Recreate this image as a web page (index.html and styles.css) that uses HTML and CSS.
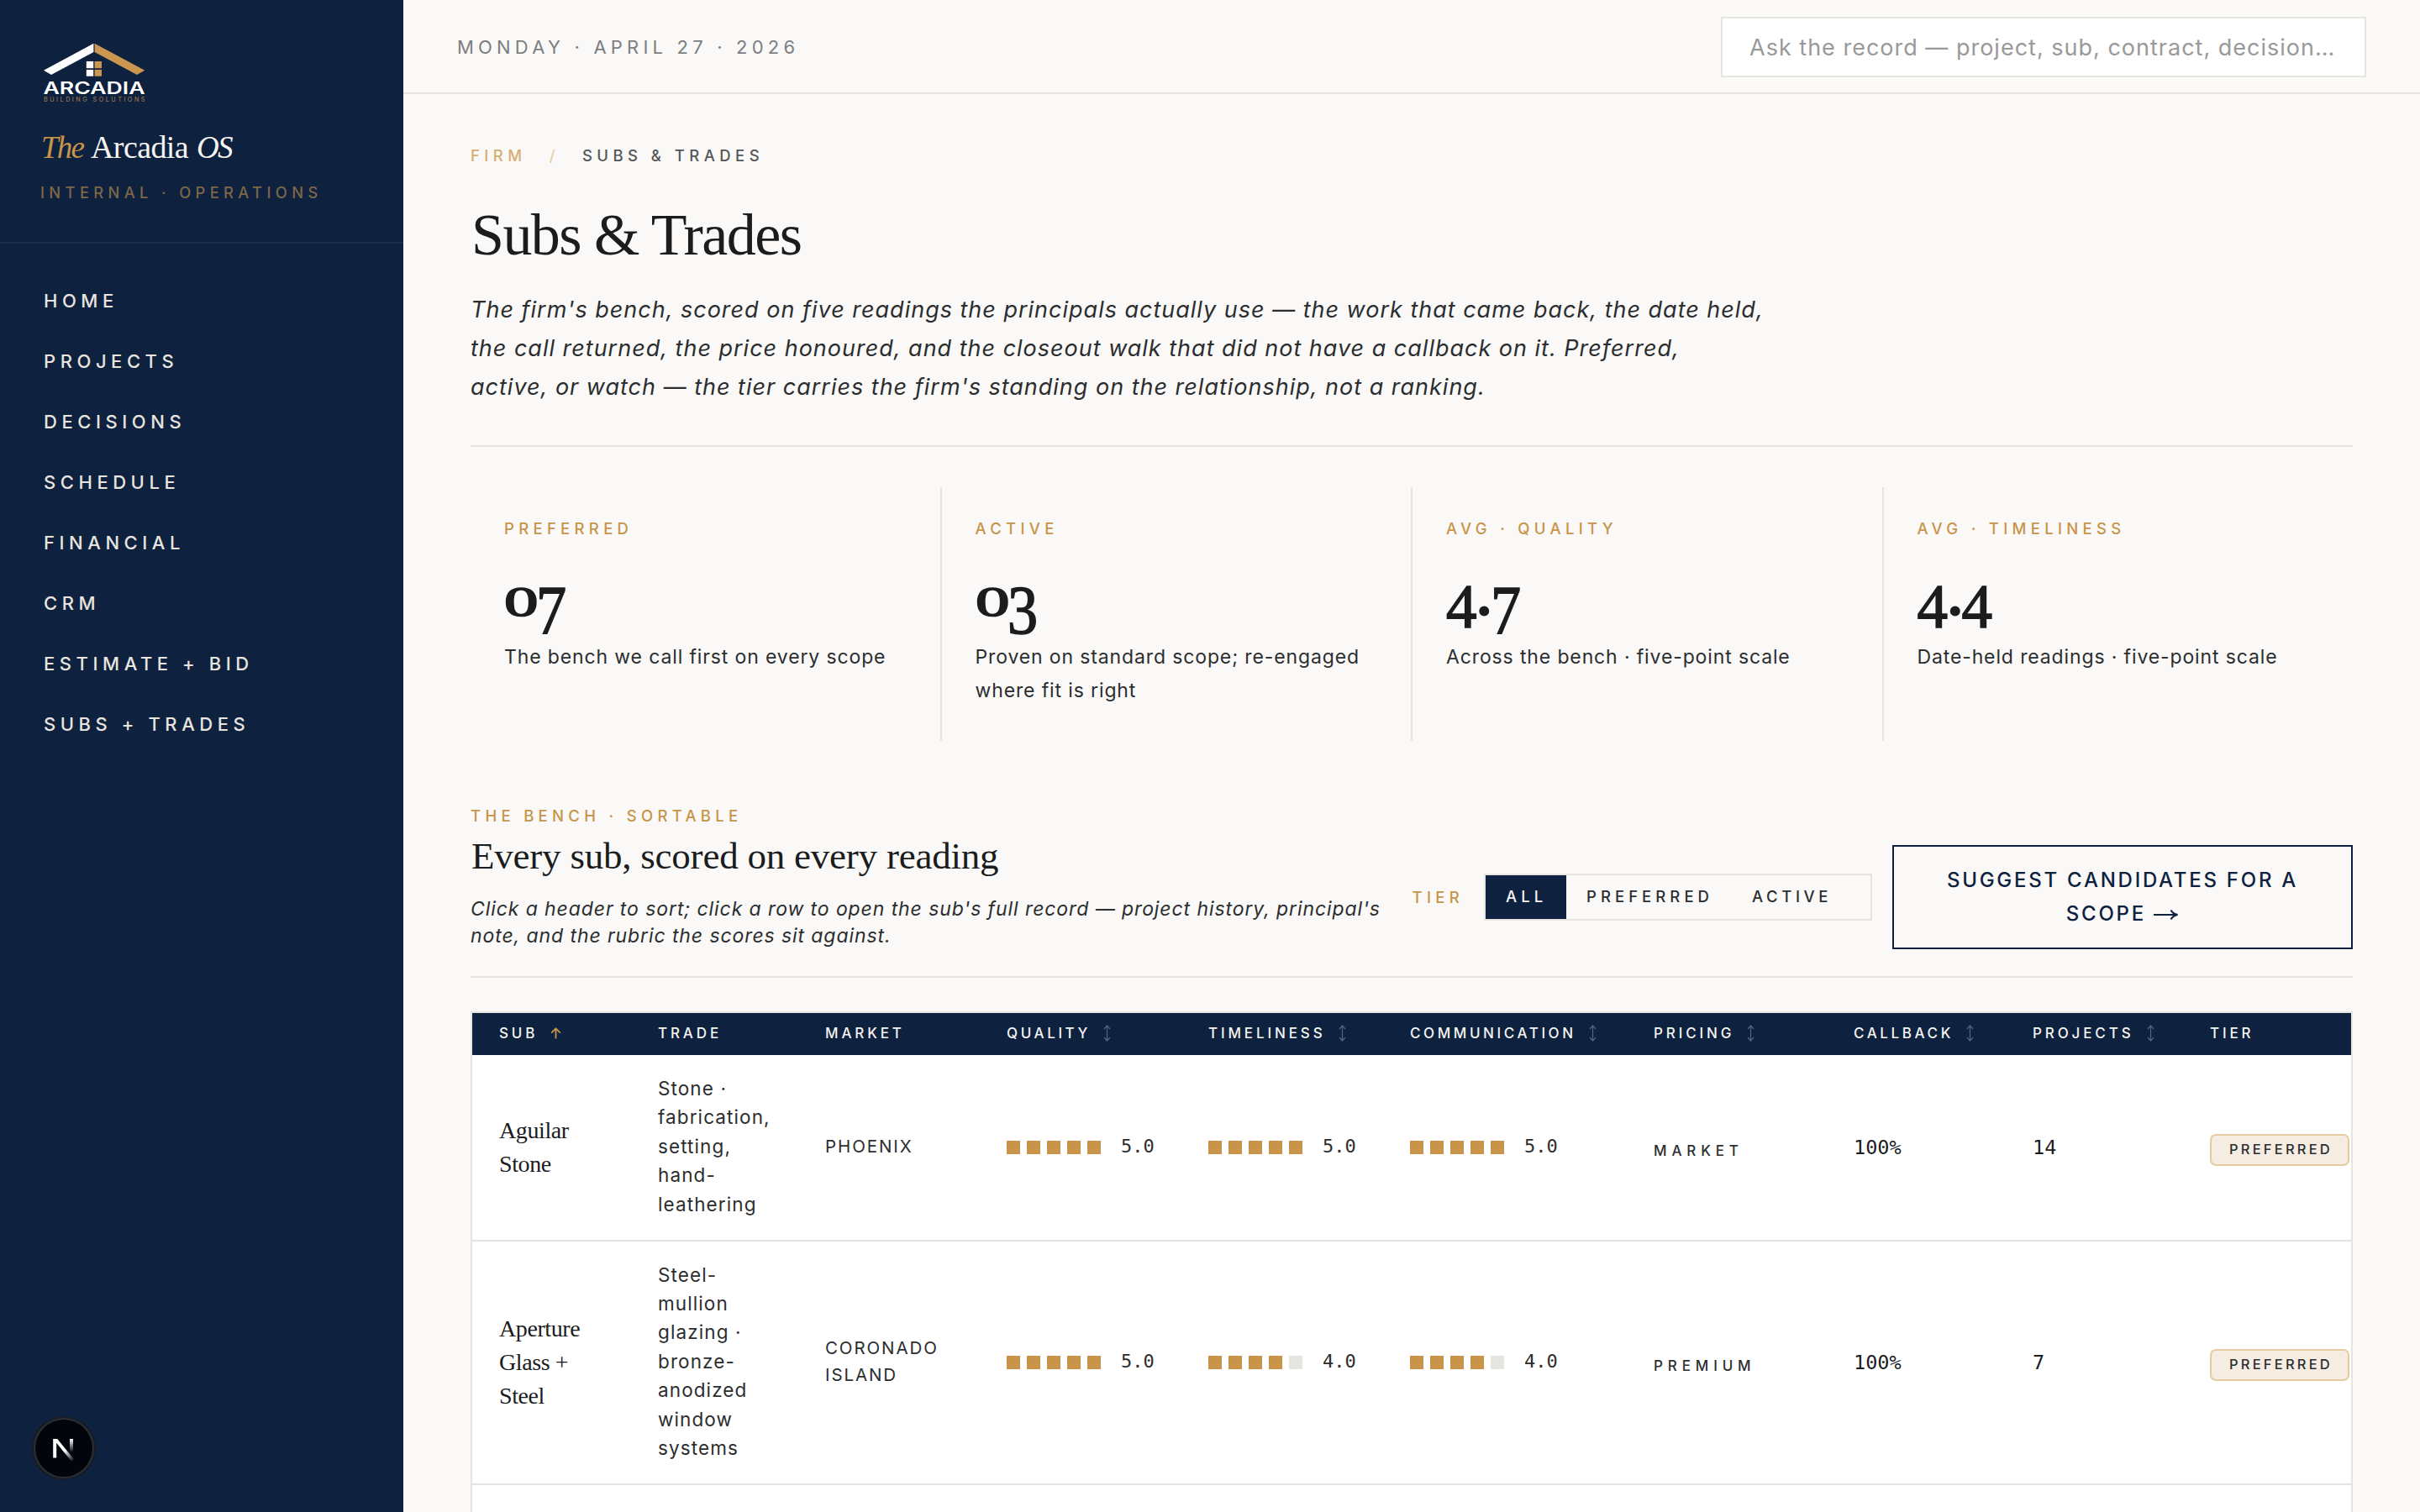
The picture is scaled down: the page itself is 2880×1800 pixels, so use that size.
FILE: index.html
```
<!DOCTYPE html>
<html lang="en">
<head>
<meta charset="utf-8">
<title>Subs &amp; Trades · The Arcadia OS</title>
<link rel="stylesheet" href="styles.css">
</head>
<body>
<svg class="defs" width="0" height="0" aria-hidden="true">
  <symbol id="sort" viewBox="0 0 9 20"><path d="M4.5 1v18M1 5l3.5-4L8 5M1 15l3.5 4L8 15" fill="none" stroke="currentColor" stroke-width="1.2"/></symbol>
</svg>
<div class="app">
  <aside class="sidebar">
    <div class="brand">
      <svg class="logo" width="124" height="72" viewBox="50 50 124 72" role="img" aria-label="Arcadia Building Solutions">
        <path d="M52 83.7 111.4 51.7V62L61 89z" fill="#fff"/>
        <path d="M112.6 51.7 172.3 83.7 163 89 112.6 62z" fill="#cb9650"/>
        <path d="M102.8 73h8.4v8.3h-8.4zM102.8 83h8.4v7.7h-8.4z" fill="#fff"/>
        <path d="M112.6 73h8.4v8.3h-8.4zM112.6 83h8.4v7.7h-8.4z" fill="#cb9650"/>
        <text class="logo-name" x="51.5" y="112" textLength="121" lengthAdjust="spacingAndGlyphs">ARCADIA</text>
        <text class="logo-sub" x="52" y="120.6" textLength="120.5">BUILDING SOLUTIONS</text>
      </svg>
      <div class="wordmark"><em class="the">The</em><span class="arcadia">Arcadia</span><em>OS</em></div>
      <div class="tagline">INTERNAL · OPERATIONS</div>
    </div>
    <nav class="nav">
      <a>HOME</a><a>PROJECTS</a><a>DECISIONS</a><a>SCHEDULE</a><a>FINANCIAL</a><a>CRM</a><a>ESTIMATE + BID</a><a>SUBS + TRADES</a>
    </nav>
  </aside>
  <div class="page">
    <header class="topbar">
      <div class="date">MONDAY · APRIL 27 · 2026</div>
      <div class="search">Ask the record — project, sub, contract, decision…</div>
    </header>
    <main class="main">
      <div class="crumbs"><span class="crumb-root">FIRM</span><span class="slash">/</span><span>SUBS &amp; TRADES</span></div>
      <h1>Subs &amp; Trades</h1>
      <p class="lede">The firm's bench, scored on five readings the principals actually use — the work that came back, the date held,<br>the call returned, the price honoured, and the closeout walk that did not have a callback on it. Preferred,<br>active, or watch — the tier carries the firm's standing on the relationship, not a ranking.</p>
      <section class="stats">
        <div class="stat"><div class="eyebrow">PREFERRED</div><div class="value"><span class="zero">0</span><span class="low">7</span></div><p>The bench we call first on every scope</p></div>
        <div class="stat"><div class="eyebrow">ACTIVE</div><div class="value"><span class="zero">0</span><span class="low">3</span></div><p>Proven on standard scope; re-engaged<br>where fit is right</p></div>
        <div class="stat"><div class="eyebrow">AVG · QUALITY</div><div class="value"><span class="four">4</span><span class="dot">.</span><span class="low">7</span></div><p>Across the bench · five-point scale</p></div>
        <div class="stat"><div class="eyebrow">AVG · TIMELINESS</div><div class="value"><span class="four">4</span><span class="dot">.</span><span class="four">4</span></div><p>Date-held readings · five-point scale</p></div>
      </section>
      <section class="bench">
        <div>
          <div class="eyebrow">THE BENCH · SORTABLE</div>
          <h2>Every sub, scored on every reading</h2>
          <p>Click a header to sort; click a row to open the sub's full record — project history, principal's<br>note, and the rubric the scores sit against.</p>
        </div>
        <div class="tools">
          <span class="eyebrow">TIER</span>
          <div class="filter"><span class="on">ALL</span><span>PREFERRED</span><span>ACTIVE</span></div>
          <div class="suggest">SUGGEST CANDIDATES FOR A<br>SCOPE <svg class="arrow" width="30" height="14" viewBox="0 0 30 14"><path d="M0 7h27M20.500 1.500Q23 6 28.500 7 23 8 20.500 12.500" fill="none" stroke="currentColor" stroke-width="2"/></svg></div>
        </div>
      </section>
      <div class="table-wrap">
        <table>
          <colgroup><col class="c1"><col class="c2"><col class="c3"><col class="c4"><col class="c4"><col class="c6"><col class="c7"><col class="c8"><col class="c9"><col></colgroup>
          <thead><tr>
            <th>SUB<svg class="up" width="13" height="14" viewBox="0 0 13 14"><path d="M6.5 13.5V1.5M1.2 6.6 6.5 1.3l5.3 5.3" fill="none" stroke="currentColor" stroke-width="1.8"/></svg></th>
            <th>TRADE</th><th>MARKET</th>
            <th class="tight">QUALITY<svg class="sort" width="9" height="20"><use href="#sort"/></svg></th>
            <th>TIMELINESS<svg class="sort" width="9" height="20"><use href="#sort"/></svg></th>
            <th class="tight">COMMUNICATION<svg class="sort" width="9" height="20"><use href="#sort"/></svg></th>
            <th>PRICING<svg class="sort" width="9" height="20"><use href="#sort"/></svg></th>
            <th class="tight">CALLBACK<svg class="sort" width="9" height="20"><use href="#sort"/></svg></th>
            <th>PROJECTS<svg class="sort" width="9" height="20"><use href="#sort"/></svg></th>
            <th>TIER</th>
          </tr></thead>
          <tbody>
            <tr class="r5">
              <td class="name">Aguilar<br>Stone</td>
              <td class="trade">Stone ·<br>fabrication,<br>setting,<br>hand-<br>leathering</td>
              <td class="market">PHOENIX</td>
              <td><div class="score"><i></i><i></i><i></i><i></i><i></i><b>5.0</b></div></td>
              <td><div class="score"><i></i><i></i><i></i><i></i><i></i><b>5.0</b></div></td>
              <td><div class="score"><i></i><i></i><i></i><i></i><i></i><b>5.0</b></div></td>
              <td class="price">MARKET</td><td class="num">100%</td><td class="num">14</td>
              <td><div class="badge">PREFERRED</div></td>
            </tr>
            <tr class="r7">
              <td class="name">Aperture<br>Glass +<br>Steel</td>
              <td class="trade">Steel-<br>mullion<br>glazing ·<br>bronze-<br>anodized<br>window<br>systems</td>
              <td class="market">CORONADO<br>ISLAND</td>
              <td><div class="score"><i></i><i></i><i></i><i></i><i></i><b>5.0</b></div></td>
              <td><div class="score"><i></i><i></i><i></i><i></i><i class="off"></i><b>4.0</b></div></td>
              <td><div class="score"><i></i><i></i><i></i><i></i><i class="off"></i><b>4.0</b></div></td>
              <td class="price">PREMIUM</td><td class="num">100%</td><td class="num">7</td>
              <td><div class="badge">PREFERRED</div></td>
            </tr>
            <tr class="next"><td colspan="10"></td></tr>
          </tbody>
        </table>
      </div>
    </main>
  </div>
</div>
<svg class="devtool" width="76" height="76" viewBox="0 0 76 76">
  <defs>
    <linearGradient id="diag" gradientUnits="userSpaceOnUse" x1="40" y1="40" x2="50" y2="53"><stop offset="0" stop-color="#fff"/><stop offset="1" stop-color="#fff" stop-opacity="0"/></linearGradient>
    <linearGradient id="stem" gradientUnits="userSpaceOnUse" x1="0" y1="27" x2="0" y2="43"><stop offset="0" stop-color="#fff"/><stop offset="1" stop-color="#fff" stop-opacity="0"/></linearGradient>
  </defs>
  <circle cx="38" cy="38" r="38" fill="#191c22"/>
  <circle cx="38" cy="38" r="36" fill="#2b2f36"/>
  <circle cx="38" cy="38" r="34" fill="#02050c"/>
  <path d="M25.2 27h4v22.5h-4z" fill="#fff"/>
  <path d="M25.2 27h5L50.3 51.6l-3 2.4-22-27z" fill="url(#diag)"/>
  <path d="M45 27h4v16h-4z" fill="url(#stem)"/>
</svg>
</body>
</html>
```
FILE: styles.css
```
* { box-sizing: border-box; }
html, body { margin: 0; height: 1800px; overflow: hidden; }
body { background: #faf9f7; color: #2b2d2f; font-family: Inter, "Open Sans", sans-serif; }
h1, h2, p { margin: 0; font-weight: 400; }
h1, h2, .wordmark, .value, .name { font-family: "Liberation Serif", serif; }
.defs { position: absolute; }
.app { display: flex; height: 1800px; }

.sidebar { width: 480px; flex: none; background: #0e213f; }
.brand { height: 290px; padding: 50px 48px 0; border-bottom: 2px solid #1b2f52; }
.logo { display: block; margin-left: 2px; }
.logo-name { font: 600 20px Inter, sans-serif; fill: #fff; }
.logo-sub { font: 500 7.2px Inter, sans-serif; fill: #94734a; }
.wordmark { display: flex; align-items: baseline; margin-top: 31px; line-height: 44px; color: #f6f4f0; font-size: 38px; }
.wordmark em { font-size: 37px; letter-spacing: -1.8px; }
.wordmark .the { width: 60px; padding-left: 1px; color: #c79449; }
.arcadia { width: 126px; letter-spacing: -0.6px; }
.tagline { margin-top: 15px; font-size: 18.3px; line-height: 32px; letter-spacing: 5.38px; font-weight: 500; color: #7d6747; }
.nav { padding: 32px 52px; display: flex; flex-direction: column; }
.nav a { font-size: 22px; line-height: 72px; letter-spacing: 5.55px; color: #e8e5df; font-weight: 500; }

.page { flex: 1; min-width: 0; }
.topbar { height: 112px; padding: 20px 64px 18px; display: flex; align-items: center; justify-content: space-between; border-bottom: 2px solid #e6e4e1; }
.date { font-size: 22px; letter-spacing: 5.2px; color: #7d7e7f; }
.search { width: 768px; height: 72px; padding: 0 32px; background: #fff; border: 2px solid #e6e4e1; font-size: 27px; line-height: 69px; letter-spacing: 1px; color: #999; white-space: nowrap; }

.main { padding: 57px 80px 0; }
.crumbs { display: flex; gap: 27px; font-size: 18.5px; line-height: 32px; letter-spacing: 5.45px; font-weight: 500; color: #555658; }
.crumb-root { color: #d6ae74; }
.slash { color: #e6cfa9; }
h1 { margin-top: 39px; padding-left: 1px; font-size: 70px; line-height: 80px; letter-spacing: -1.53px; color: #1a1c1e; }
.lede { margin-top: 26px; padding-bottom: 46px; border-bottom: 2px solid #e6e4e1; font-size: 27px; line-height: 46px; letter-spacing: .99px; font-style: italic; white-space: nowrap; }

.eyebrow { font-size: 18.5px; line-height: 32px; letter-spacing: 5.3px; font-weight: 500; color: #c79449; }
.stats { margin-top: 48px; height: 302px; display: grid; grid-template-columns: repeat(4, 1fr); gap: 2px; background: #e6e4e1; }
.stat { background: #faf9f7; padding: 33px 0 0 40px; }
.stat p { font-size: 23px; line-height: 40px; letter-spacing: .87px; white-space: nowrap; }

/* Old-style figures: each digit is sized and dropped below the baseline */
.value { display: flex; align-items: baseline; height: 117px; font-weight: 400; line-height: 0; color: #1a1c1e; -webkit-text-stroke: 1.6px #1a1c1e; }
.value::before { content: ""; display: inline-block; height: 88px; }
.value span { display: block; transform-origin: left; }
.zero { width: 38px; font-size: 50px; transform: scaleX(1.62); }
.low { font-size: 83px; transform: translateY(21px) scaleX(.87); }
.four { width: 36px; font-size: 73px; transform: translateY(14px); }
.dot { width: 17px; font-size: 74px; font-weight: 700; -webkit-text-stroke: 0; }

.bench { margin-top: 73px; padding-bottom: 32px; border-bottom: 2px solid #e6e4e1; display: flex; align-items: flex-end; justify-content: space-between; }
h2 { margin-top: 6px; padding-left: 1px; font-size: 45px; line-height: 52px; letter-spacing: -0.22px; color: #1a1c1e; }
.bench p { margin-top: 21px; font-size: 23px; line-height: 32px; letter-spacing: .91px; font-style: italic; white-space: nowrap; }
.tools { display: flex; align-items: center; gap: 24px; }
.filter { width: 462px; height: 56px; display: flex; border: 2px solid #e6e4e1; font-size: 18.5px; line-height: 51px; font-weight: 500; letter-spacing: 5.05px; }
.filter span { padding: 0 22px 0 24px; }
.filter .on { width: 96px; background: #0e213f; color: #f6f4f0; }
.filter span:last-child { letter-spacing: 4.6px; }
.suggest { width: 548px; height: 124px; padding-top: 20px; border: 2px solid #0e213f; text-align: center; font-size: 24px; line-height: 40px; font-weight: 500; letter-spacing: 2.75px; color: #0e213f; }
.arrow { vertical-align: 0; }

.table-wrap { margin-top: 40px; border: 2px solid #e6e4e1; border-bottom: 0; background: #fff; }
table { width: 2236px; table-layout: fixed; border-spacing: 0; }
.c1 { width: 189px; } .c2 { width: 199px; } .c3 { width: 216px; } .c4 { width: 240px; } .c6 { width: 290px; }
.c7 { width: 238px; } .c8 { width: 213px; } .c9 { width: 211px; }
th { height: 50px; padding: 0 0 2px 32px; background: #0e213f; color: #f6f4f0; text-align: left; font-size: 17px; line-height: 48px; font-weight: 500; letter-spacing: 3.87px; white-space: nowrap; }
.tight { letter-spacing: 3.6px; }
th svg { margin-left: 15px; }
.up { color: #c79449; vertical-align: -1px; }
.sort { color: #566480; vertical-align: -4px; }
td { padding: 0 0 0 32px; border-bottom: 2px solid #e6e4e1; vertical-align: middle; white-space: nowrap; }
.r5 { height: 222px; }
.r7 { height: 290px; }
.next { height: 32px; }
.next td { border: 0; }
.name { font-size: 28px; line-height: 40px; letter-spacing: -0.4px; color: #1a1c1e; padding-bottom: 1px; }
.trade { font-size: 22.5px; line-height: 34.4px; letter-spacing: 1.1px; padding-bottom: 2px; }
.market { font-size: 20.5px; line-height: 32px; letter-spacing: 1.9px; padding-bottom: 2px; }
.score { display: flex; align-items: center; gap: 8px; }
.score i { width: 16px; height: 16px; background: #c79449; }
.score .off { background: #e6e5e1; }
.score b { margin-left: 16px; padding-bottom: 3px; font: 400 22px/28px "DejaVu Sans Mono", monospace; }
.price { font-size: 17px; font-weight: 500; letter-spacing: 5.87px; padding-top: 7px; }
.num { font: 400 23.5px/28px "DejaVu Sans Mono", monospace; color: #1a1c1e; }
.badge { width: 166px; height: 38px; margin-top: 6px; padding-left: 21px; border: 2px solid #e6cba0; border-radius: 7px; background: #f6ede2; font-size: 16.5px; line-height: 32px; font-weight: 500; letter-spacing: 3.2px; }

.devtool { position: fixed; left: 38px; top: 1686px; }
```
